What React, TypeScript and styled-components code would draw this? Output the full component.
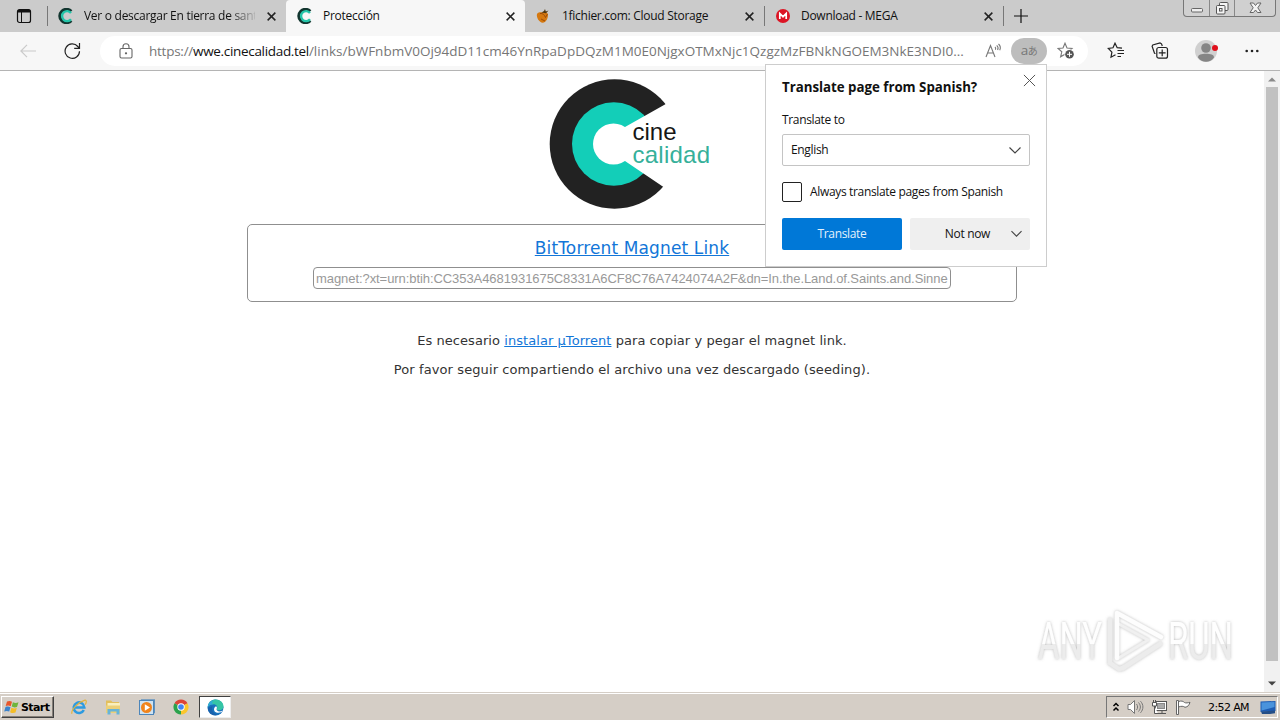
import React from "react";
import styled, { createGlobalStyle } from "styled-components";

const GlobalStyle = createGlobalStyle`
  * {
    box-sizing: border-box;
  }

  body {
    margin: 0;
    overflow: hidden;
    background: white;
  }

  svg {
    display: block;
    flex: none;
  }
`;

const uiFont = `"Open Sans", "Noto Sans CJK JP", sans-serif`;

const Screen = styled.div`
  width: 1280px;
  height: 720px;
  display: flex;
  flex-direction: column;
  position: relative;
  overflow: hidden;
  font-family: ${uiFont};
  font-size: 12px;
  color: #111;
`;

const Label = styled.span<{ $spacing?: number }>`
  white-space: nowrap;
  letter-spacing: ${(p) => p.$spacing ?? -0.34}px;
`;

/* ---- tab strip ---- */

const TabStrip = styled.header`
  height: 32px;
  flex: none;
  display: flex;
  background: #cbcbcb;
`;

const TabActions = styled.div`
  width: 47px;
  display: flex;
  align-items: center;
  justify-content: center;
`;

const Tab = styled.div<{ $active?: boolean; $width: number; $line?: boolean }>`
  width: ${(p) => p.$width}px;
  height: 32px;
  display: flex;
  align-items: center;
  padding: 0 10px 0 11px;
  border-radius: ${(p) => (p.$active ? "4px 4px 0 0" : "0")};
  background: ${(p) =>
    p.$active
      ? "#f7f7f7"
      : p.$line
        ? "linear-gradient(#777, #777) 0 6px / 1px 20px no-repeat"
        : "none"};

  svg + span {
    margin-left: 10px;
  }
`;

const TabTitle = styled(Label)<{ $fade?: boolean }>`
  flex: 1;
  overflow: hidden;
  line-height: 20px;
  ${(p) =>
    p.$fade &&
    "margin-right: 12px; mask-image: linear-gradient(to right, black 145px, transparent 175px);"}
`;

const NewTab = styled.div`
  width: 36px;
  display: flex;
  align-items: center;
  justify-content: center;
  background: linear-gradient(#777, #777) 0 6px / 1px 20px no-repeat;
`;

const WindowButtons = styled.div`
  display: flex;
  width: 93px;
  height: 17px;
  margin-left: auto;
  margin-right: 4px;
  border: 1px solid #777;
  border-top: none;
  border-radius: 0 0 4px 4px;
  background: #d0d0d0;
`;

const WindowButton = styled.div<{ $width: number }>`
  width: ${(p) => p.$width}px;
  display: flex;
  align-items: center;
  justify-content: center;

  & + & {
    border-left: 1px solid #888;
  }
`;

/* ---- toolbar ---- */

const Toolbar = styled.div`
  height: 39px;
  flex: none;
  display: flex;
  align-items: center;
  background: #f7f7f7;
  border-bottom: 1px solid #b4b4b4;
`;

const NavButtons = styled.div`
  width: 100px;
  display: flex;
  align-items: center;
  padding-left: 20px;
  gap: 27px;
`;

const AddressBar = styled.div`
  width: 988px;
  height: 30px;
  border-radius: 15px;
  background: white;
  display: flex;
  align-items: center;
  padding-left: 19px;
`;

const Url = styled.div`
  display: flex;
  width: 836px;
  margin-left: 16px;
  font-size: 13.5px;
  color: #767676;
`;

const Host = styled(Label)`
  color: #111;
`;

const TranslatePill = styled.div`
  width: 36px;
  height: 26px;
  border-radius: 13px;
  margin: 0 10px 0 8px;
  background: #bdbdbd;
  color: #777;
  font-size: 13.5px;
  line-height: 24px;
  text-align: center;
  letter-spacing: -0.5px;

  small {
    font-size: 10px;
  }
`;

const ToolbarActions = styled.div`
  flex: 1;
  display: flex;
  align-items: center;
  padding-left: 19px;
  gap: 26px;
`;

/* ---- page ---- */

const Viewport = styled.div`
  height: 621px;
  flex: none;
  display: flex;
`;

const Page = styled.main`
  flex: 1;
  display: flex;
  flex-direction: column;
  align-items: center;
  padding-top: 6px;
  font-family: "DejaVu Sans", Verdana, sans-serif;
  font-size: 13px;
  color: #333;
`;

const LinkBox = styled.section`
  width: 770px;
  height: 78px;
  margin: 13px 0 29px;
  display: flex;
  flex-direction: column;
  align-items: center;
  border: 1px solid #8f8f8f;
  border-radius: 5px;
`;

const Anchor = styled.a`
  color: #1276d8;
  text-decoration: underline;
  text-underline-offset: 1px;
`;

const MagnetTitle = styled(Anchor)`
  margin-top: 12px;
  font-size: 17px;
  line-height: 22px;
  white-space: nowrap;
  letter-spacing: 0.13px;
`;

const MagnetField = styled.div`
  width: 638px;
  height: 22px;
  margin-top: 8px;
  padding: 0 2px;
  border: 1px solid #8f8f8f;
  border-radius: 4px;
  font: 13px/22px "Liberation Sans", Arial, sans-serif;
  letter-spacing: -0.07px;
  color: #999;
  white-space: nowrap;
`;

const Note = styled.p<{ $spacing: number }>`
  margin: 0 0 9px;
  line-height: 20px;
  white-space: nowrap;
  letter-spacing: ${(p) => p.$spacing}px;
`;

const Scrollbar = styled.div`
  width: 16px;
  display: flex;
  flex-direction: column;
  align-items: center;
  background: #f1f1f1;
  padding: 6px 0;
`;

const Thumb = styled.div`
  width: 12px;
  height: 574px;
  background: #c1c1c1;
  margin: 5px 0 auto;
`;

/* ---- translate popup ---- */

const Popup = styled.aside`
  position: absolute;
  left: 765px;
  top: 64px;
  width: 282px;
  height: 203px;
  padding: 9px 16px 16px;
  background: white;
  border: 1px solid #cdcdcd;
  color: #111;
`;

const PopupHeader = styled.div`
  display: flex;
  justify-content: space-between;
  height: 36px;
  margin-right: -6px;
  font-size: 13.3px;
  font-weight: 700;
  line-height: 27px;
`;

const FieldLabel = styled.div`
  height: 24px;
  line-height: 20px;
`;

const Select = styled.div`
  height: 32px;
  display: flex;
  align-items: center;
  justify-content: space-between;
  padding: 0 8px 1px;
  border: 1px solid #c4c4c4;
  border-radius: 2px;
`;

const CheckRow = styled.div`
  display: flex;
  align-items: center;
  gap: 8px;
  height: 20px;
  margin: 16px 0;
  line-height: 18px;
`;

const Checkbox = styled.span`
  width: 20px;
  height: 20px;
  border: 1px solid #222;
  border-radius: 2px;
`;

const ButtonRow = styled.div`
  display: grid;
  grid-template-columns: 1fr 1fr;
  gap: 8px;
`;

const Button = styled.button<{ $primary?: boolean }>`
  height: 32px;
  display: flex;
  align-items: center;
  justify-content: ${(p) => (p.$primary ? "center" : "flex-end")};
  gap: 21px;
  padding: 0 8px 1px;
  border: none;
  border-radius: 2px;
  background: ${(p) => (p.$primary ? "#0078d7" : "#efefef")};
  color: ${(p) => (p.$primary ? "#e3f1fc" : "#111")};
  font: 12px ${uiFont};
`;

const Watermark = styled.div`
  position: absolute;
  left: 1030px;
  top: 602px;
`;

/* ---- taskbar ---- */

const Taskbar = styled.footer`
  flex: 1;
  display: flex;
  align-items: center;
  padding: 1px 2px 0 1px;
  background: #d5cec6;
  border-top: 1px solid #d5cec6;
  box-shadow: inset 0 1px 0 white;
`;

const StartButton = styled.div`
  width: 53px;
  height: 22px;
  display: flex;
  align-items: center;
  padding-left: 2px;
  gap: 1px;
  border: 1px solid;
  border-color: white #404040 #404040 white;
  box-shadow: inset -1px -1px 0 #857f78;
  font: 700 11px "DejaVu Sans", Tahoma, sans-serif;
  color: black;
`;

const QuickLaunch = styled.div`
  display: flex;
  align-items: center;
  gap: 18px;
  margin-left: 17px;
`;

const ActiveTask = styled.div`
  width: 32px;
  height: 22px;
  margin-left: 10px;
  display: flex;
  align-items: center;
  justify-content: center;
  background: white;
  border: 1px solid;
  border-color: #404040 #eee #eee #404040;
`;

const Tray = styled.div`
  width: 172px;
  height: 22px;
  margin-left: auto;
  display: flex;
  align-items: center;
  gap: 7px;
  padding-left: 5px;
  border: 1px solid;
  border-color: #777 white white #777;
  font: 11px "DejaVu Sans", Tahoma, sans-serif;
  color: black;
`;

const Clock = styled(Label)`
  width: 42px;
  margin: 0 3px 0 9px;
`;

/* ---- icons ---- */

const CineIcon = () => (
  <svg width="16" height="16" viewBox="0 0 16 16" fill="none">
    <path d="M13.2 3.400A6.600 6.600 0 1 0 13.200 12.600" stroke="#12352f" strokeWidth="3.200" />
    <path d="M13 5A5 5 0 1 0 13 11.200" stroke="#24c5a9" strokeWidth="2.400" />
  </svg>
);

const FichierIcon = () => (
  <svg width="16" height="16" viewBox="0 0 16 16">
    <path d="M1 6C2.500 3.700 5.300 4.500 7 4.300c2.500-.8 5.200.2 5 3.200-.2 3.500-2.200 7-5.200 7.200C3.600 14.900 0 9.500 1 6Z" fill="#d5780f" />
    <path d="M4 5.500c3-.5 4.500 1.500 5.500 4l2-3.500M5 11l4 2" stroke="#9b4b09" fill="none" />
    <path d="M5.500 4.500 8 3l1-2 .8 2.500 2.700-1L10 5.200Z" fill="#4d3510" />
  </svg>
);

const MegaIcon = () => (
  <svg width="16" height="16" viewBox="0 0 16 16">
    <circle cx="8" cy="8" r="7" fill="#dc1525" />
    <path d="M4.800 11V5.500L8 8.700l3.200-3.200V11" stroke="white" strokeWidth="1.700" fill="none" />
  </svg>
);

const CloseIcon = ({ size = 9, color = "#222", weight = 1.5 }) => (
  <svg width={size} height={size} viewBox="0 0 10 10" stroke={color} strokeWidth={(weight * 10) / size}>
    <path d="M.7.7 9.300 9.300M9.300.7.7 9.300" />
  </svg>
);

const Chevron = ({ size = 12 }) => (
  <svg width={size} height={size} viewBox="0 0 12 12" fill="none" stroke="#444" strokeWidth="1.200">
    <path d="m.5 3.500 5.500 5.500 5.500-5.500" />
  </svg>
);

const PanelIcon = () => (
  <svg width="16" height="16" viewBox="0 0 16 16" fill="none" stroke="#111">
    <rect x="1.500" y="1.500" width="13" height="13" rx="2" strokeWidth="1.200" />
    <path d="M2 3.200h12" strokeWidth="2.600" />
    <path d="M5.500 4v10" />
  </svg>
);

const PlusIcon = () => (
  <svg width="14" height="14" viewBox="0 0 14 14" stroke="#111" strokeWidth="1.200">
    <path d="M7 0v14M0 7h14" />
  </svg>
);

const BackIcon = () => (
  <svg width="17" height="14" viewBox="0 0 17 14" fill="none" stroke="#cacaca" strokeWidth="1.200">
    <path d="M16 7H1M7 .8.9 7 7 13.200" />
  </svg>
);

const ReloadIcon = () => (
  <svg width="17" height="18" viewBox="0 0 17 18" fill="none" stroke="#222" strokeWidth="1.200">
    <path d="M15.500 9.200A7.200 7.200 0 1 1 13.800 4.500L15.300 6M15.500 1v5.300h-5.300" />
  </svg>
);

const LockIcon = () => (
  <svg width="14" height="16" viewBox="0 0 14 16" fill="none" stroke="#666" strokeWidth="1.100">
    <rect x="1" y="5.500" width="12" height="9.500" rx="1.500" />
    <path d="M4 5.500V3.800a3 3 0 0 1 6 0v1.700" />
    <circle cx="7" cy="10.300" r=".6" fill="#666" />
  </svg>
);

const ReadAloudIcon = () => (
  <svg width="18" height="18" viewBox="0 0 18 18" fill="none" stroke="#777" strokeWidth="1.100">
    <path d="m1 15 4.500-11.500L10 15M2.500 11h6M10 5c.8.700.8 1.800.4 2.700M11.700 3.300c1.400 1.200 1.600 3.200.9 4.700M13.500 2c1.900 1.700 2.200 4.200 1.200 6.300" />
  </svg>
);

const AddFavoriteIcon = () => (
  <svg width="18" height="18" viewBox="0 0 18 18" fill="none">
    <path d="M8 1.200 10 6l5 .5-3.800 3.300 1.200 5L8 12.200l-4.400 2.600 1.200-5L1 6.500 6 6Z" stroke="#777" strokeWidth="1.100" />
    <circle cx="12.500" cy="12.300" r="5" fill="white" />
    <circle cx="12.500" cy="12.300" r="4.300" fill="#555" />
    <path d="M12.500 9.800v5M10 12.300h5" stroke="white" />
  </svg>
);

const FavoritesIcon = () => (
  <svg width="18" height="18" viewBox="0 0 18 18" fill="none" stroke="#222" strokeWidth="1.200">
    <path d="M15 6.200 10.200 5.700 8 1.200 6 5.800 1.300 6.500l3.600 3.700L4 15.200l4.500-2.500M10.500 8.500H17M10.500 11.500H17M10.500 14.500h3.500" />
  </svg>
);

const CollectionsIcon = () => (
  <svg width="18" height="18" viewBox="0 0 18 18" fill="none" stroke="#222" strokeWidth="1.200">
    <path d="m4.500 11.500-1-.2-2.400-7 .7-1.300L9 1l1.500.8.8 2.200" />
    <rect x="5.800" y="5.500" width="10.700" height="10.700" rx="2" />
    <path d="M11.200 7.500v6.800M7.800 10.900h6.800" />
  </svg>
);

const AvatarIcon = () => (
  <svg width="24" height="24" viewBox="0 0 24 24">
    <circle cx="11" cy="12" r="11" fill="#d0d0d0" />
    <circle cx="11" cy="9" r="4.800" fill="#858585" />
    <path d="M3 18.500c0-3 3.500-3.700 8-3.700s8 .7 8 3.700c-2 3-5 4.200-8 4.200s-6-1.200-8-4.200Z" fill="#858585" />
    <circle cx="20" cy="9" r="3" fill="#e0101c" />
  </svg>
);

const MoreIcon = () => (
  <svg width="14" height="4" viewBox="0 0 14 4" fill="#222">
    <circle cx="1.700" cy="2" r="1.300" />
    <circle cx="7" cy="2" r="1.300" />
    <circle cx="12.300" cy="2" r="1.300" />
  </svg>
);

const MinimizeIcon = () => (
  <svg width="12" height="12" viewBox="0 0 12 12">
    <rect x=".5" y="6.500" width="11" height="3.500" rx="1" fill="#eee" stroke="#666" />
  </svg>
);

const RestoreIcon = () => (
  <svg width="13" height="13" viewBox="0 0 13 13" fill="#f4f4f4" stroke="#555">
    <rect x="3.500" y=".5" width="8.500" height="8" rx="1" />
    <rect x=".5" y="3.500" width="8.500" height="8.500" rx="1" />
    <rect x="3.500" y="6.500" width="2.500" height="2.500" />
  </svg>
);

const WindowCloseIcon = () => (
  <svg width="13" height="12" viewBox="0 0 13 12" fill="#f4f4f4" stroke="#666">
    <path d="M1 1h3.500l2 2.500 2-2.500H12L8.800 5.800 12 10.500H8.500L6.500 8l-2 2.500H1l3.200-4.700Z" />
  </svg>
);

const Logo = () => (
  <svg width="166" height="134" viewBox="0 0 166 134">
    <circle cx="65.500" cy="67" r="64.800" fill="#222" />
    <circle cx="64.800" cy="67" r="41.800" fill="#13ceb8" />
    <circle cx="64.500" cy="67" r="20.500" fill="white" />
    <path d="M115 28 76 50v34l37 25 18 12h10V18.900h-10Z" fill="white" />
    <g fontFamily="Liberation Sans, Arial, sans-serif" fontSize="24">
      <text x="83.500" y="63" fill="#161616">cine</text>
      <text x="83.500" y="86" fill="#36b09a" textLength="77.500">calidad</text>
    </g>
  </svg>
);

const WatermarkLogo = () => (
  <svg width="230" height="74" viewBox="0 0 230 74">
    <defs>
      <linearGradient id="fade" x1="0" y1="0" x2="0" y2="1">
        <stop offset=".55" stopColor="#fefefe" />
        <stop offset=".55" stopColor="#ececec" />
      </linearGradient>
      <filter id="soft" x="-10%" y="-10%" width="120%" height="120%">
        <feDropShadow dx="0" dy="0" stdDeviation="1.500" floodColor="#888" floodOpacity=".6" />
      </filter>
    </defs>
    <g filter="url(#soft)" fill="url(#fade)" fontFamily="Roboto, sans-serif" fontSize="51">
      <text x="8" y="57" textLength="64" lengthAdjust="spacingAndGlyphs">ANY</text>
      <text x="138" y="57" textLength="65" lengthAdjust="spacingAndGlyphs">RUN</text>
    </g>
    <g filter="url(#soft)" fill="none" strokeWidth="4.500" strokeLinejoin="round" strokeLinecap="round">
      <path d="M87 57V21l31 17-31 19" stroke="#f0f0f0" strokeWidth="3" />
      <path d="M80 18v43M93 66l37-24" stroke="#ececec" />
      <path d="M87 56V11l44 24" stroke="#fdfdfd" />
      <path d="M80 61l9 6 4-1" stroke="#ececec" />
    </g>
  </svg>
);

const WindowsIcon = () => (
  <svg width="16" height="16" viewBox="0 0 16 16">
    <path d="M3 2.500c2-1 3.500-.7 5 .2L6.700 7.200C5 6.300 3.500 6.300 1.700 7Z" fill="#e8562a" />
    <path d="M8.900 3.200c1.700.9 3.500 1 5.600.1L13 8c-2 .7-3.700.5-5.300-.4Z" fill="#6eb53c" />
    <path d="M1.500 8c2-.8 3.400-.6 5 .2L5.200 12.600c-1.700-.9-3.200-.9-5 0Z" fill="#3b83cc" />
    <path d="M7.400 8.700c1.800.9 3.400 1 5.400.3l-1.300 4.600c-2 .8-3.700.5-5.400-.4Z" fill="#f4bd27" />
  </svg>
);

const ExplorerIcon = () => (
  <svg width="16" height="16" viewBox="0 0 16 16" fill="none">
    <path d="M12.800 11A5.300 5.300 0 1 1 13.300 8.500H4" stroke="#2d9be0" strokeWidth="2.600" />
    <path d="M1 14.800C-.5 11 8 2.800 14 1.200c2.200-.2 1 3.500.2 4.500" stroke="#e3b43b" strokeWidth="1.200" />
  </svg>
);

const FolderIcon = () => (
  <svg width="16" height="16" viewBox="0 0 16 16">
    <path d="M1 3V1.500h5L7.500 3H14v10H1Z" fill="#e3bf5c" />
    <path d="M2.500 4H15v4H2.500Z" fill="#f9efbd" />
    <path d="M1 6.500h14V14H1Z" fill="#ecd078" />
    <path d="M2.500 15.500V10h12v5.500h-3v-3h-6v3Z" fill="#67b4d8" />
  </svg>
);

const PlayerIcon = () => (
  <svg width="16" height="16" viewBox="0 0 16 16">
    <rect x="2.500" y=".8" width="13" height="13" fill="#a9cce8" stroke="#5f91bd" />
    <rect x=".5" y="1.500" width="14" height="14" fill="#cfe3f2" stroke="#4d86ba" />
    <circle cx="7.500" cy="8.500" r="5.500" fill="#f0841c" />
    <path d="M5.800 5.300v6.400l5.200-3.200Z" fill="white" />
  </svg>
);

const ChromeIcon = () => (
  <svg width="16" height="16" viewBox="0 0 16 16">
    <path d="M8 8 1.500 4.250A7.500 7.500 0 0 1 14.500 4.250Z" fill="#dd4437" />
    <path d="M8 8 14.500 4.250A7.500 7.500 0 0 1 8 15.500Z" fill="#fbc62c" />
    <path d="M8 8 8 15.500A7.500 7.500 0 0 1 1.500 4.250Z" fill="#2ba24c" />
    <circle cx="8" cy="8" r="3.700" fill="white" />
    <circle cx="8" cy="8" r="2.800" fill="#4285f4" />
  </svg>
);

const EdgeIcon = () => (
  <svg width="17" height="17" viewBox="0 0 17 17">
    <circle cx="8.500" cy="8.500" r="8" fill="#1872bd" />
    <path d="M.7 8C1.500 2.800 5 .5 8.700.5c4.300 0 7.800 3.200 7.800 7 0 2.500-2 3.800-4.200 3.800-1.700 0-2.800-.6-2.500-1.300C11.300 7.500 9 5.200 6.500 5.200 3.800 5.200 1.500 6.300.7 8Z" fill="#35c5a5" />
    <path d="M.7 8C1.500 3.500 4.500 1.500 8 1.500c-3 1-4 2.500-1.500 3.700C3.800 5.200 1.500 6.300.7 8Z" fill="#2fa9dc" />
    <path d="M9.700 9.700C9 11 10.500 12.500 13 12.400l3-.8c-2 3-7.500 2.900-8.700.2-.8-2 .2-4 1.700-4.500.9.600 1.200 1.500.7 2.400Z" fill="white" />
    <path d="M5.500 7c-1.700 3 .3 7.700 5 9-5 1.700-9.500-2-9.800-7Z" fill="#1a4f9c" opacity=".5" />
  </svg>
);

const SpeakerIcon = () => (
  <svg width="17" height="16" viewBox="0 0 17 16" fill="none" stroke="#777">
    <path d="M1 5.500h2.500L7.500 1.500v13L3.500 10.500H1Z" fill="white" />
    <path d="M9.500 5c1.500 2 1.500 4 0 6M11.500 3.500c2.500 3 2.500 6 0 9M13.500 2.200c3.200 3.500 3.200 8 0 11.600" />
  </svg>
);

const NetworkIcon = () => (
  <svg width="17" height="16" viewBox="0 0 17 16" stroke="#555">
    <rect x="4.500" y="2.500" width="11" height="9" fill="white" />
    <rect x="6.500" y="4.500" width="7" height="5" fill="#aaa" stroke="#888" />
    <path d="M7 14.500h8M11 12v2" fill="none" />
    <path d="M1.500 3.500h4V7h-4ZM2.500 1v2.500M4.500 1v2.500M3.500 7v7.500H7" fill="white" />
  </svg>
);

const FlagIcon = () => (
  <svg width="17" height="16" viewBox="0 0 17 16" fill="white" stroke="#666">
    <path d="M1.500 1.500h2v14h-2ZM3.500 2.500c3-.8 4.500-.5 6 1 1.500.8 3.500.3 5.500-.2-1 3-2 4.500-5 5-1.500-1.300-4-1.300-6.500-.3Z" />
  </svg>
);

const DesktopIcon = () => (
  <svg width="16" height="13" viewBox="0 0 16 13">
    <path d="M.5.5 15.500 0v10L.5 11Z" fill="#1d5cb3" />
    <path d="M1.500 1.500 14.500 1v5L1.500 9.500Z" fill="#4a93dc" />
    <path d="M1 10.500 15 9.500v2.700l-5 .8H2Z" fill="#234e87" />
  </svg>
);

const DoubleUpIcon = () => (
  <svg width="8" height="10" viewBox="0 0 8 10" fill="none" stroke="black" strokeWidth="1.500">
    <path d="m1.500 4 2.500-2.500L6.500 4M1.500 8.500 4 6l2.500 2.500" />
  </svg>
);

const ArrowIcon = ({ down = false }) => (
  <svg width="8" height="5" viewBox="0 0 8 5" fill={down ? "#444" : "#8a8a8a"}>
    <path d={down ? "M0 .5h8L4 4.500Z" : "M0 4.500h8L4 .5Z"} />
  </svg>
);

type TabInfo = {
  title: string;
  icon: React.ReactNode;
  width: number;
  active?: boolean;
  fade?: boolean;
  line?: boolean;
};

const tabs: TabInfo[] = [
  { title: "Ver o descargar En tierra de santos", icon: <CineIcon />, width: 239, fade: true, line: true },
  { title: "Protección", icon: <CineIcon />, width: 239, active: true },
  { title: "1fichier.com: Cloud Storage", icon: <FichierIcon />, width: 239 },
  { title: "Download - MEGA", icon: <MegaIcon />, width: 239, line: true },
];

const TranslatePopup: React.FC = () => (
  <Popup>
    <PopupHeader>
      <Label $spacing={-0.02}>Translate page from Spanish?</Label>
      <CloseIcon size={13} weight={1} color="#555" />
    </PopupHeader>
    <FieldLabel>
      <Label>Translate to</Label>
    </FieldLabel>
    <Select>
      <Label>English</Label>
      <Chevron />
    </Select>
    <CheckRow>
      <Checkbox />
      <Label>Always translate pages from Spanish</Label>
    </CheckRow>
    <ButtonRow>
      <Button $primary>
        <Label>Translate</Label>
      </Button>
      <Button>
        <Label>Not now</Label>
        <Chevron size={11} />
      </Button>
    </ButtonRow>
  </Popup>
);

const App: React.FC = () => (
  <Screen>
    <GlobalStyle />
    <TabStrip>
      <TabActions>
        <PanelIcon />
      </TabActions>
      {tabs.map((tab) => (
        <Tab key={tab.title} $active={tab.active} $width={tab.width} $line={tab.line}>
          {tab.icon}
          <TabTitle $spacing={-0.28} $fade={tab.fade}>
            {tab.title}
          </TabTitle>
          <CloseIcon />
        </Tab>
      ))}
      <NewTab>
        <PlusIcon />
      </NewTab>
      <WindowButtons>
        <WindowButton $width={25}>
          <MinimizeIcon />
        </WindowButton>
        <WindowButton $width={25}>
          <RestoreIcon />
        </WindowButton>
        <WindowButton $width={41}>
          <WindowCloseIcon />
        </WindowButton>
      </WindowButtons>
    </TabStrip>

    <Toolbar>
      <NavButtons>
        <BackIcon />
        <ReloadIcon />
      </NavButtons>
      <AddressBar>
        <LockIcon />
        <Url>
          <Label $spacing={-0.25}>https://</Label>
          <Host $spacing={-0.32}>wwe.cinecalidad.tel</Host>
          <Label $spacing={0}>
            /links/bWFnbmV0Oj94dD11cm46YnRpaDpDQzM1M0E0NjgxOTMxNjc1QzgzMzFBNkNGOEM3NkE3NDI0...
          </Label>
        </Url>
        <ReadAloudIcon />
        <TranslatePill>
          a<small>あ</small>
        </TranslatePill>
        <AddFavoriteIcon />
      </AddressBar>
      <ToolbarActions>
        <FavoritesIcon />
        <CollectionsIcon />
        <AvatarIcon />
        <MoreIcon />
      </ToolbarActions>
    </Toolbar>

    <Viewport>
      <Page>
        <Logo />
        <LinkBox>
          <MagnetTitle>BitTorrent Magnet Link</MagnetTitle>
          <MagnetField>
            magnet:?xt=urn:btih:CC353A4681931675C8331A6CF8C76A7424074A2F&amp;dn=In.the.Land.of.Saints.and.Sinne
          </MagnetField>
        </LinkBox>
        <Note $spacing={0.06}>
          Es necesario <Anchor>instalar µTorrent</Anchor> para copiar y pegar el magnet link.
        </Note>
        <Note $spacing={0.1}>
          Por favor seguir compartiendo el archivo una vez descargado (seeding).
        </Note>
      </Page>
      <Scrollbar>
        <ArrowIcon />
        <Thumb />
        <ArrowIcon down />
      </Scrollbar>
    </Viewport>

    <Taskbar>
      <StartButton>
        <WindowsIcon />
        <Label $spacing={-0.6}>Start</Label>
      </StartButton>
      <QuickLaunch>
        <ExplorerIcon />
        <FolderIcon />
        <PlayerIcon />
        <ChromeIcon />
      </QuickLaunch>
      <ActiveTask>
        <EdgeIcon />
      </ActiveTask>
      <Tray>
        <DoubleUpIcon />
        <SpeakerIcon />
        <NetworkIcon />
        <FlagIcon />
        <Clock $spacing={-0.6}>2:52 AM</Clock>
        <DesktopIcon />
      </Tray>
    </Taskbar>

    <TranslatePopup />
    <Watermark>
      <WatermarkLogo />
    </Watermark>
  </Screen>
);

export default App;
